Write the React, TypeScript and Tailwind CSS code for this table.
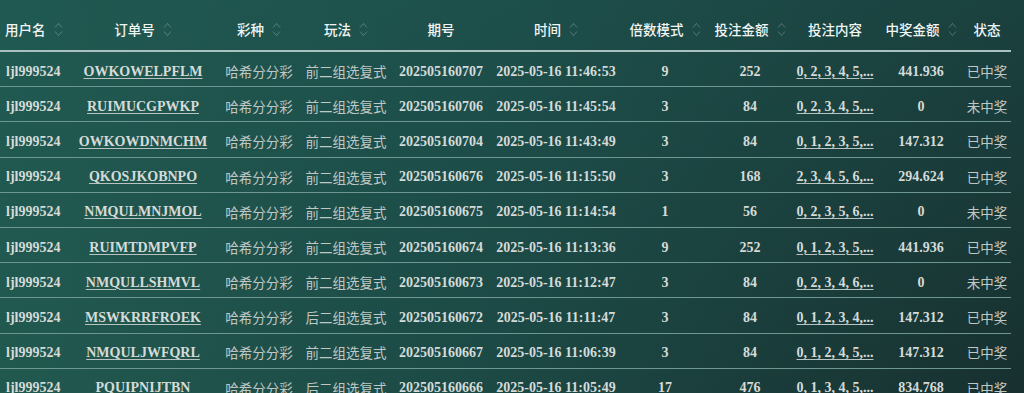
import { Fragment } from 'react';

interface BetRecord {
  user: string;
  orderNo: string;
  lottery: string;
  playType: string;
  issue: string;
  time: string;
  multiple: string;
  amount: string;
  content: string;
  prize: string;
  status: string;
}

const records: BetRecord[] = [
  { user: 'ljl999524', orderNo: 'OWKOWELPFLM', lottery: '哈希分分彩', playType: '前二组选复式', issue: '202505160707', time: '2025-05-16 11:46:53', multiple: '9', amount: '252', content: '0, 2, 3, 4, 5,...', prize: '441.936', status: '已中奖' },
  { user: 'ljl999524', orderNo: 'RUIMUCGPWKP', lottery: '哈希分分彩', playType: '前二组选复式', issue: '202505160706', time: '2025-05-16 11:45:54', multiple: '3', amount: '84', content: '0, 2, 3, 4, 5,...', prize: '0', status: '未中奖' },
  { user: 'ljl999524', orderNo: 'OWKOWDNMCHM', lottery: '哈希分分彩', playType: '前二组选复式', issue: '202505160704', time: '2025-05-16 11:43:49', multiple: '3', amount: '84', content: '0, 1, 2, 3, 5,...', prize: '147.312', status: '已中奖' },
  { user: 'ljl999524', orderNo: 'QKOSJKOBNPO', lottery: '哈希分分彩', playType: '前二组选复式', issue: '202505160676', time: '2025-05-16 11:15:50', multiple: '3', amount: '168', content: '2, 3, 4, 5, 6,...', prize: '294.624', status: '已中奖' },
  { user: 'ljl999524', orderNo: 'NMQULMNJMOL', lottery: '哈希分分彩', playType: '前二组选复式', issue: '202505160675', time: '2025-05-16 11:14:54', multiple: '1', amount: '56', content: '0, 2, 3, 5, 6,...', prize: '0', status: '未中奖' },
  { user: 'ljl999524', orderNo: 'RUIMTDMPVFP', lottery: '哈希分分彩', playType: '前二组选复式', issue: '202505160674', time: '2025-05-16 11:13:36', multiple: '9', amount: '252', content: '0, 1, 2, 3, 5,...', prize: '441.936', status: '已中奖' },
  { user: 'ljl999524', orderNo: 'NMQULLSHMVL', lottery: '哈希分分彩', playType: '前二组选复式', issue: '202505160673', time: '2025-05-16 11:12:47', multiple: '3', amount: '84', content: '0, 2, 3, 4, 6,...', prize: '0', status: '未中奖' },
  { user: 'ljl999524', orderNo: 'MSWKRRFROEK', lottery: '哈希分分彩', playType: '后二组选复式', issue: '202505160672', time: '2025-05-16 11:11:47', multiple: '3', amount: '84', content: '0, 1, 2, 3, 4,...', prize: '147.312', status: '已中奖' },
  { user: 'ljl999524', orderNo: 'NMQULJWFQRL', lottery: '哈希分分彩', playType: '前二组选复式', issue: '202505160667', time: '2025-05-16 11:06:39', multiple: '3', amount: '84', content: '0, 1, 2, 4, 5,...', prize: '147.312', status: '已中奖' },
  { user: 'ljl999524', orderNo: 'PQUIPNIJTBN', lottery: '哈希分分彩', playType: '后二组选复式', issue: '202505160666', time: '2025-05-16 11:05:49', multiple: '17', amount: '476', content: '0, 1, 3, 4, 5,...', prize: '834.768', status: '已中奖' },
];

const columns = [
  { label: '用户名', sortable: true },
  { label: '订单号', sortable: true },
  { label: '彩种', sortable: true },
  { label: '玩法', sortable: true },
  { label: '期号', sortable: false },
  { label: '时间', sortable: true },
  { label: '倍数模式', sortable: true },
  { label: '投注金额', sortable: true },
  { label: '投注内容', sortable: false },
  { label: '中奖金额', sortable: true },
  { label: '状态', sortable: false },
];

const gridCols =
  'grid grid-cols-[69px_148px_84px_90px_100px_130px_88px_82px_88px_84px_48px]';

const serif = "font-['Liberation_Serif',serif] font-bold text-[14px] text-[#d5dbd8]";
const link = `${serif} underline underline-offset-2 decoration-1 decoration-[#b9c4c1]`;
const cjk = "font-['Noto_Sans_CJK_SC',sans-serif] text-[13.5px] text-[#c0c8c6]";

function SortIcon() {
  return (
    <svg width="9" height="17" viewBox="0 0 9 17" fill="none" className="shrink-0">
      <path d="M1 6.5 L4.5 2.5 L8 6.5" stroke="rgba(255,255,255,0.25)" strokeWidth="1" />
      <path d="M1 10.5 L4.5 14.5 L8 10.5" stroke="rgba(255,255,255,0.25)" strokeWidth="1" />
    </svg>
  );
}

function Cell({ children, left }: { children: React.ReactNode; left?: boolean }) {
  return (
    <div
      className={`flex items-center pt-[4px] whitespace-nowrap ${left ? 'justify-start pl-[6px]' : 'justify-center'}`}
    >
      {children}
    </div>
  );
}

export default function App() {
  return (
    <div className="h-[393px] w-full overflow-hidden bg-gradient-to-r from-[#21594f] via-[#1c4844] to-[#17302f]">
      <div className="h-full w-full bg-gradient-to-b from-[#1f5a55]/40 to-transparent">
        <div className="w-[1011px]">
          <div className={`${gridCols} h-[52px] pt-[8px] border-b-2 border-[#a9c2bf]`}>
            {columns.map((col, i) => (
              <div
                key={col.label}
                className={`flex items-center gap-[8px] whitespace-nowrap font-['Noto_Sans_CJK_SC',sans-serif] font-medium text-[13.5px] text-[#f1f5f4] ${i === 0 ? 'justify-start pl-[5px]' : 'justify-center'}`}
              >
                <span>{col.label}</span>
                {col.sortable && <SortIcon />}
              </div>
            ))}
          </div>

          {records.map((r) => (
            <div
              key={r.orderNo}
              className={`${gridCols} h-[35.2px] border-b border-[#6f9792]`}
            >
              <Cell left>
                <span className={serif}>{r.user}</span>
              </Cell>
              <Cell>
                <a className={link}>{r.orderNo}</a>
              </Cell>
              <Cell>
                <span className={cjk}>{r.lottery}</span>
              </Cell>
              <Cell>
                <span className={cjk}>{r.playType}</span>
              </Cell>
              <Cell>
                <span className={serif}>{r.issue}</span>
              </Cell>
              <Cell>
                <span className={serif}>{r.time}</span>
              </Cell>
              <Cell>
                <span className={serif}>{r.multiple}</span>
              </Cell>
              <Cell>
                <span className={serif}>{r.amount}</span>
              </Cell>
              <Cell>
                <a className={link}>{r.content}</a>
              </Cell>
              <Cell>
                <span className={serif}>{r.prize}</span>
              </Cell>
              <Cell>
                <span className={cjk}>{r.status}</span>
              </Cell>
            </div>
          ))}
        </div>
      </div>
    </div>
  );
}
